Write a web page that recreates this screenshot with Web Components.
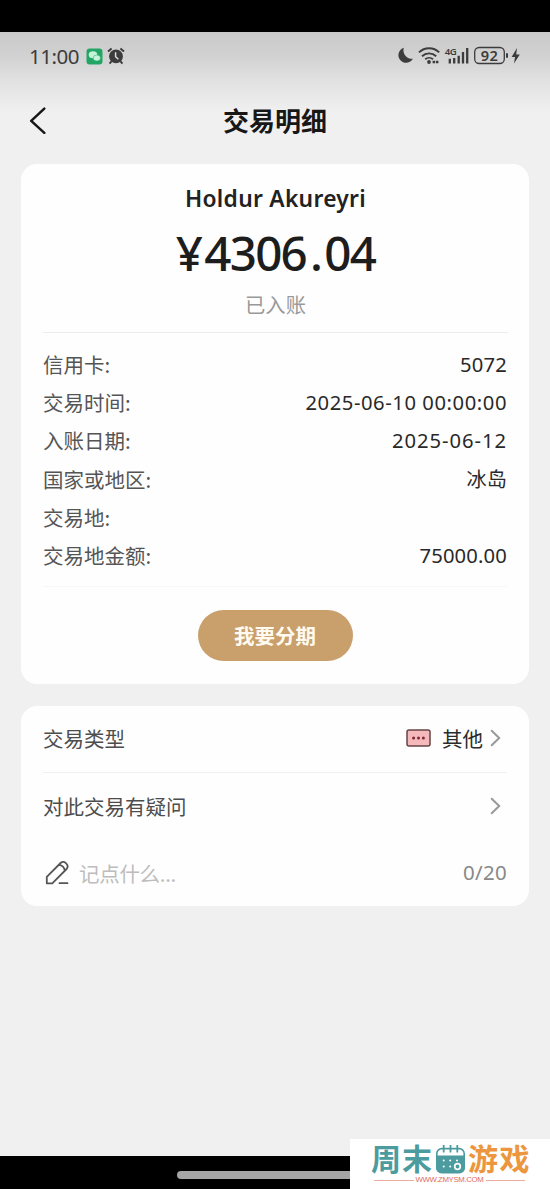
<!DOCTYPE html>
<html lang="zh-CN">
<head>
<meta charset="utf-8">
<title>交易明细</title>
<style>
html,body{margin:0;padding:0;background:#000}
body{width:550px;height:1189px;overflow:hidden;font-family:"Noto Sans","Noto Sans CJK SC",sans-serif}
</style>
</head>
<body>
<transaction-page></transaction-page>
<script>
const define = (name, html, ready) => {
  const t = document.createElement('template');
  t.innerHTML = html;
  customElements.define(name, class extends HTMLElement {
    constructor() {
      super();
      this.attachShadow({mode: 'open'}).append(t.content.cloneNode(true));
    }
    connectedCallback() { if (ready) ready(this); }
  });
};

/* Text tracked out (or in) to the width given by its "w" attribute. */
define('tracked-text', `<style>
:host{display:block;white-space:nowrap;flex:none}
span{display:inline-block}
</style><span><slot></slot></span>`, el => {
  const w = parseFloat(el.getAttribute('w'));
  const s = el.shadowRoot.querySelector('span');
  const n = [...el.textContent].length;
  const ls = (w - s.getBoundingClientRect().width) / n;
  s.style.letterSpacing = ls.toFixed(3) + 'px';
});

define('status-bar', `<style>
:host{display:flex;align-items:center;height:48px;padding:0 29px 0 29px;box-sizing:border-box;color:#3c3c3c}
.time{font:400 20.5px/24px "Noto Sans",sans-serif;margin:-1px 7px 0 0}
svg{display:block;flex:none}
.gap{flex:1}
</style>
<tracked-text class="time" w="50">11:00</tracked-text>
<svg width="17" height="17" viewBox="0 0 17 17"><rect x=".5" y=".5" width="16" height="16" rx="3.2" fill="#22a565"/><ellipse cx="7" cy="6.8" rx="4.3" ry="3.5" fill="#c4f5d8"/><ellipse cx="10.8" cy="10" rx="3.7" ry="3" fill="#c4f5d8" stroke="#22a565" stroke-width=".5"/></svg>
<svg style="margin-left:4px" width="18" height="18" viewBox="0 0 18 18"><circle cx="9" cy="9.4" r="6.9" fill="#3c3c3c"/><path d="M1 4.6 4.6 1.6M17 4.6 13.4 1.6M4.6 14.2 2.6 16.6M13.4 14.2l2 2.4" stroke="#3c3c3c" stroke-width="1.9" fill="none"/><path d="M8.6 5.2v4.5l2.8 2.6" stroke="#ddd" stroke-width="1.5" fill="none"/></svg>
<span class="gap"></span>
<svg width="124" height="22" viewBox="397 45 124 22">
<path d="M403.8 47.8A7.7 7.7 0 1 0 412.9 58.8A8.6 8.6 0 0 1 403.8 47.8Z" fill="#3c3c3c"/>
<g fill="none" stroke="#3c3c3c" stroke-width="1.9"><path d="M419 52.4a14.5 14.5 0 0 1 20.2 0"/><path d="M422 56.2a10.3 10.3 0 0 1 14.2 0"/><path d="M425.2 59.3a6 6 0 0 1 7.8 0"/></g>
<circle cx="429" cy="62" r="1.9" fill="#3c3c3c"/><path d="M432.6 62h2.4m.8 0h2.6" stroke="#3c3c3c" stroke-width="2.6"/>
<text x="444.8" y="55" font-family="Noto Sans" font-weight="600" font-size="9.6" fill="#3c3c3c" textLength="12">4G</text>
<path d="M449.8 58.8v4.6M454.2 58v5.4M458.7 55.8v7.6M463 52v11.4M467.2 48v15.4" stroke="#3c3c3c" stroke-width="2.3"/>
<rect x="474.7" y="47.5" width="29.6" height="16" rx="4.5" fill="none" stroke="#3c3c3c" stroke-width="1.3"/>
<path d="M507 53.2v4.6" stroke="#3c3c3c" stroke-width="2"/>
<text x="480.8" y="60.8" font-family="Noto Sans" font-weight="600" font-size="14.6" fill="#3c3c3c" textLength="17">92</text>
<path d="M517 48 511.6 57h3.4l-1 6.6 5.8-9.2h-3.6Z" fill="#3c3c3c"/>
</svg>`);

define('nav-bar', `<style>
:host{display:grid;grid-template-columns:80px 1fr 80px;align-items:center;height:84px;box-sizing:border-box;padding-bottom:4px;color:#171717}
svg{display:block;margin-left:29px}
tracked-text{justify-self:center;font:700 26px/36px "Noto Sans CJK SC",sans-serif;margin-top:-1px}
</style>
<svg width="18" height="28" viewBox="0 0 18 28"><path d="M15.3 2.6 2.2 14.8 15.3 26.8" fill="none" stroke="#171717" stroke-width="2.5" stroke-linecap="round" stroke-linejoin="round"/></svg>
<tracked-text w="106"><slot></slot></tracked-text>`);

define('info-card', `<style>
:host{display:block;margin:0 21px;box-sizing:border-box;background:#fefefe;border-radius:16px}
</style><slot></slot>`);

define('amount-header', `<style>
:host{display:flex;flex-direction:column;align-items:center;height:169px;box-sizing:border-box;padding-top:20px;margin:0 21px 0 22px;border-bottom:1px solid #ededed}
.name{font:600 22.8px/30px "Noto Sans",sans-serif;color:#222}
.amount{display:flex;margin-top:10px;font:500 47.5px/58px "Noto Sans",sans-serif;color:#1d1d1d}
.dot{margin:0 3px 0 4px}
.state{font:400 20.3px/30px "Noto Sans CJK SC",sans-serif;color:#999;margin-top:7px}
</style>
<tracked-text class="name" w="181">Holdur Akureyri</tracked-text>
<div class="amount"><tracked-text w="28.5">¥</tracked-text><tracked-text w="171">4306<span class="dot">.</span>04</tracked-text></div>
<tracked-text class="state" w="61">已入账</tracked-text>`);

define('detail-item', `<style>
:host{display:flex;justify-content:space-between;align-items:center;height:38.2px}
.l{font:400 20.5px/30px "Noto Sans CJK SC",sans-serif;color:#555}
.v{font:400 20.2px/30px "Noto Sans","Noto Sans CJK SC",sans-serif;color:#292929}
</style><span class="l"><slot name="label"></slot></span><span class="v"><slot name="value"></slot></span>`);

define('pill-button', `<style>
:host{display:flex;align-items:center;justify-content:center;width:155px;height:51px;margin:23px auto 0;border-radius:26px;background:#c9a06b;color:#fffaf0;font:700 20.5px/30px "Noto Sans CJK SC",sans-serif;box-sizing:border-box;padding-bottom:2px}
</style><slot></slot>`);

define('action-row', `<style>
:host{display:flex;align-items:center;height:67px;box-sizing:border-box;margin:0 22px;padding-bottom:2px;font:400 20.5px/30px "Noto Sans CJK SC",sans-serif;color:#4d4d4d}
:host([divided]){border-bottom:1px solid #f0f0f0}
.end{margin-left:auto;display:flex;align-items:center;color:#2b2b2b}
svg{margin:0 6px 0 7px;display:block}
:host([plain]) svg{display:none}
</style><slot></slot><span class="end"><slot name="end"></slot><svg width="11" height="18" viewBox="0 0 11 18"><path d="M1.7 1.7 9.2 9 1.7 16.3" fill="none" stroke="#999" stroke-width="2" stroke-linecap="round"/></svg></span>`);

define('other-icon', `<style>:host{display:block;margin-right:11px}svg{display:block}</style>
<svg width="25" height="18" viewBox="0 0 25 18"><rect x="1" y="1" width="23" height="16" rx="2" fill="#f5b8bb" stroke="#654447" stroke-width="1.5"/><g fill="#7c2b32"><circle cx="7.6" cy="9" r="1.5"/><circle cx="12.5" cy="9" r="1.5"/><circle cx="17.4" cy="9" r="1.5"/></g></svg>`);

define('pencil-icon', `<style>:host{display:block;margin:0 9px 0 2px}svg{display:block}</style>
<svg width="25" height="25" viewBox="0 0 25 25" fill="none" stroke="#555" stroke-width="1.8" stroke-linejoin="round" stroke-linecap="round"><path d="M1.8 16.8 15.6 3Q18.2.7 20.9 3.1Q24 6.1 21.6 9L7.3 23.3H1.8ZM14 4.8Q19 5.4 19.8 10.6M14.5 23.2h8"/></svg>`);

define('home-area', `<style>
:host{display:block;height:33px;background:#000;padding-top:15px;box-sizing:border-box}
i{display:block;width:197px;height:8px;border-radius:4px;background:#a5a5a5;margin-left:177px}
</style><i></i>`);

define('site-badge', `<style>
:host{position:absolute;right:0;bottom:0;width:200px;height:50px;background:#fff;display:flex;flex-direction:column;box-sizing:border-box;padding:4px 20px 0 21px}
.brand{display:flex;align-items:center;height:32px;font:700 30px/33px "Liberation Sans","Noto Sans CJK SC",sans-serif}
.a{color:#4b9b9f}.b{color:#ec9640}
svg{display:block;margin:-1px 2px 0;flex:none}
.url{display:flex;align-items:center;gap:2px;height:10px;margin:0 5px 0 3px;color:#df6a5c}
.url i{flex:1;height:1px;background:#edaca2}
.url tracked-text{font:400 7.8px/10px "Liberation Sans",sans-serif}
</style>
<div class="brand"><tracked-text class="a" w="62">周末</tracked-text>
<svg width="31" height="30" viewBox="0 0 31 30"><rect x="1.8" y="4.6" width="27.4" height="24" rx="5" fill="#fff" stroke="#4b9b9f" stroke-width="1.6"/><path d="M1.2 11.6h28.6V24a5 5 0 0 1-5 5H6.2a5 5 0 0 1-5-5Z" fill="#4b9b9f"/><path d="M8.7 1v7.4M15.5 1v7.4M22.3 1v7.4" stroke="#4b9b9f" stroke-width="1.8"/><g fill="#fff"><circle cx="8.7" cy="16.5" r="1"/><circle cx="15.2" cy="16.5" r="1"/><circle cx="22" cy="16.5" r="1"/><circle cx="8.7" cy="22.5" r="1"/><circle cx="15.2" cy="22.5" r="1"/></g><circle cx="22.5" cy="22.5" r="2.8" fill="none" stroke="#fff" stroke-width="1.7"/></svg>
<tracked-text class="b" w="63">游戏</tracked-text></div>
<div class="url"><i></i><tracked-text w="68">WWW.ZMYSM.COM</tracked-text><i></i></div>`);

define('transaction-page', `<style>
:host{display:flex;flex-direction:column;position:relative;width:550px;height:1189px;box-sizing:border-box;padding-top:32px;background:#000}
main{flex:1;background:linear-gradient(#c9c9c9 0,#d2d2d2 25px,#e2e2e2 50px,#f0f0f0 80px,#f0f0f0)}
.rows{margin:0 22px;padding:12px 0 12px;border-bottom:1px solid #f7f7f7}
.first{height:520px}
.second{height:200px;margin-top:22px}
.hint{color:#bdbdbd}
.count{color:#888;font-family:"Noto Sans",sans-serif;margin-top:-2px}
</style>
<main>
<status-bar></status-bar>
<nav-bar>交易明细</nav-bar>
<info-card class="first">
<amount-header></amount-header>
<div class="rows">
<detail-item><span slot="label">信用卡:</span><tracked-text slot="value" w="47">5072</tracked-text></detail-item>
<detail-item><span slot="label">交易时间:</span><tracked-text slot="value" w="201.5">2025-06-10 00:00:00</tracked-text></detail-item>
<detail-item><span slot="label">入账日期:</span><tracked-text slot="value" w="115">2025-06-12</tracked-text></detail-item>
<detail-item><span slot="label">国家或地区:</span><span slot="value">冰岛</span></detail-item>
<detail-item><span slot="label">交易地:</span></detail-item>
<detail-item><span slot="label">交易地金额:</span><tracked-text slot="value" w="87.5">75000.00</tracked-text></detail-item>
</div>
<pill-button>我要分期</pill-button>
</info-card>
<info-card class="second">
<action-row divided>交易类型<other-icon slot="end"></other-icon><span slot="end">其他</span></action-row>
<action-row>对此交易有疑问</action-row>
<action-row plain><pencil-icon></pencil-icon><tracked-text class="hint" w="97">记点什么...</tracked-text><tracked-text class="count" slot="end" w="44">0/20</tracked-text></action-row>
</info-card>
</main>
<home-area></home-area>
<site-badge></site-badge>`);
</script>
</body>
</html>
